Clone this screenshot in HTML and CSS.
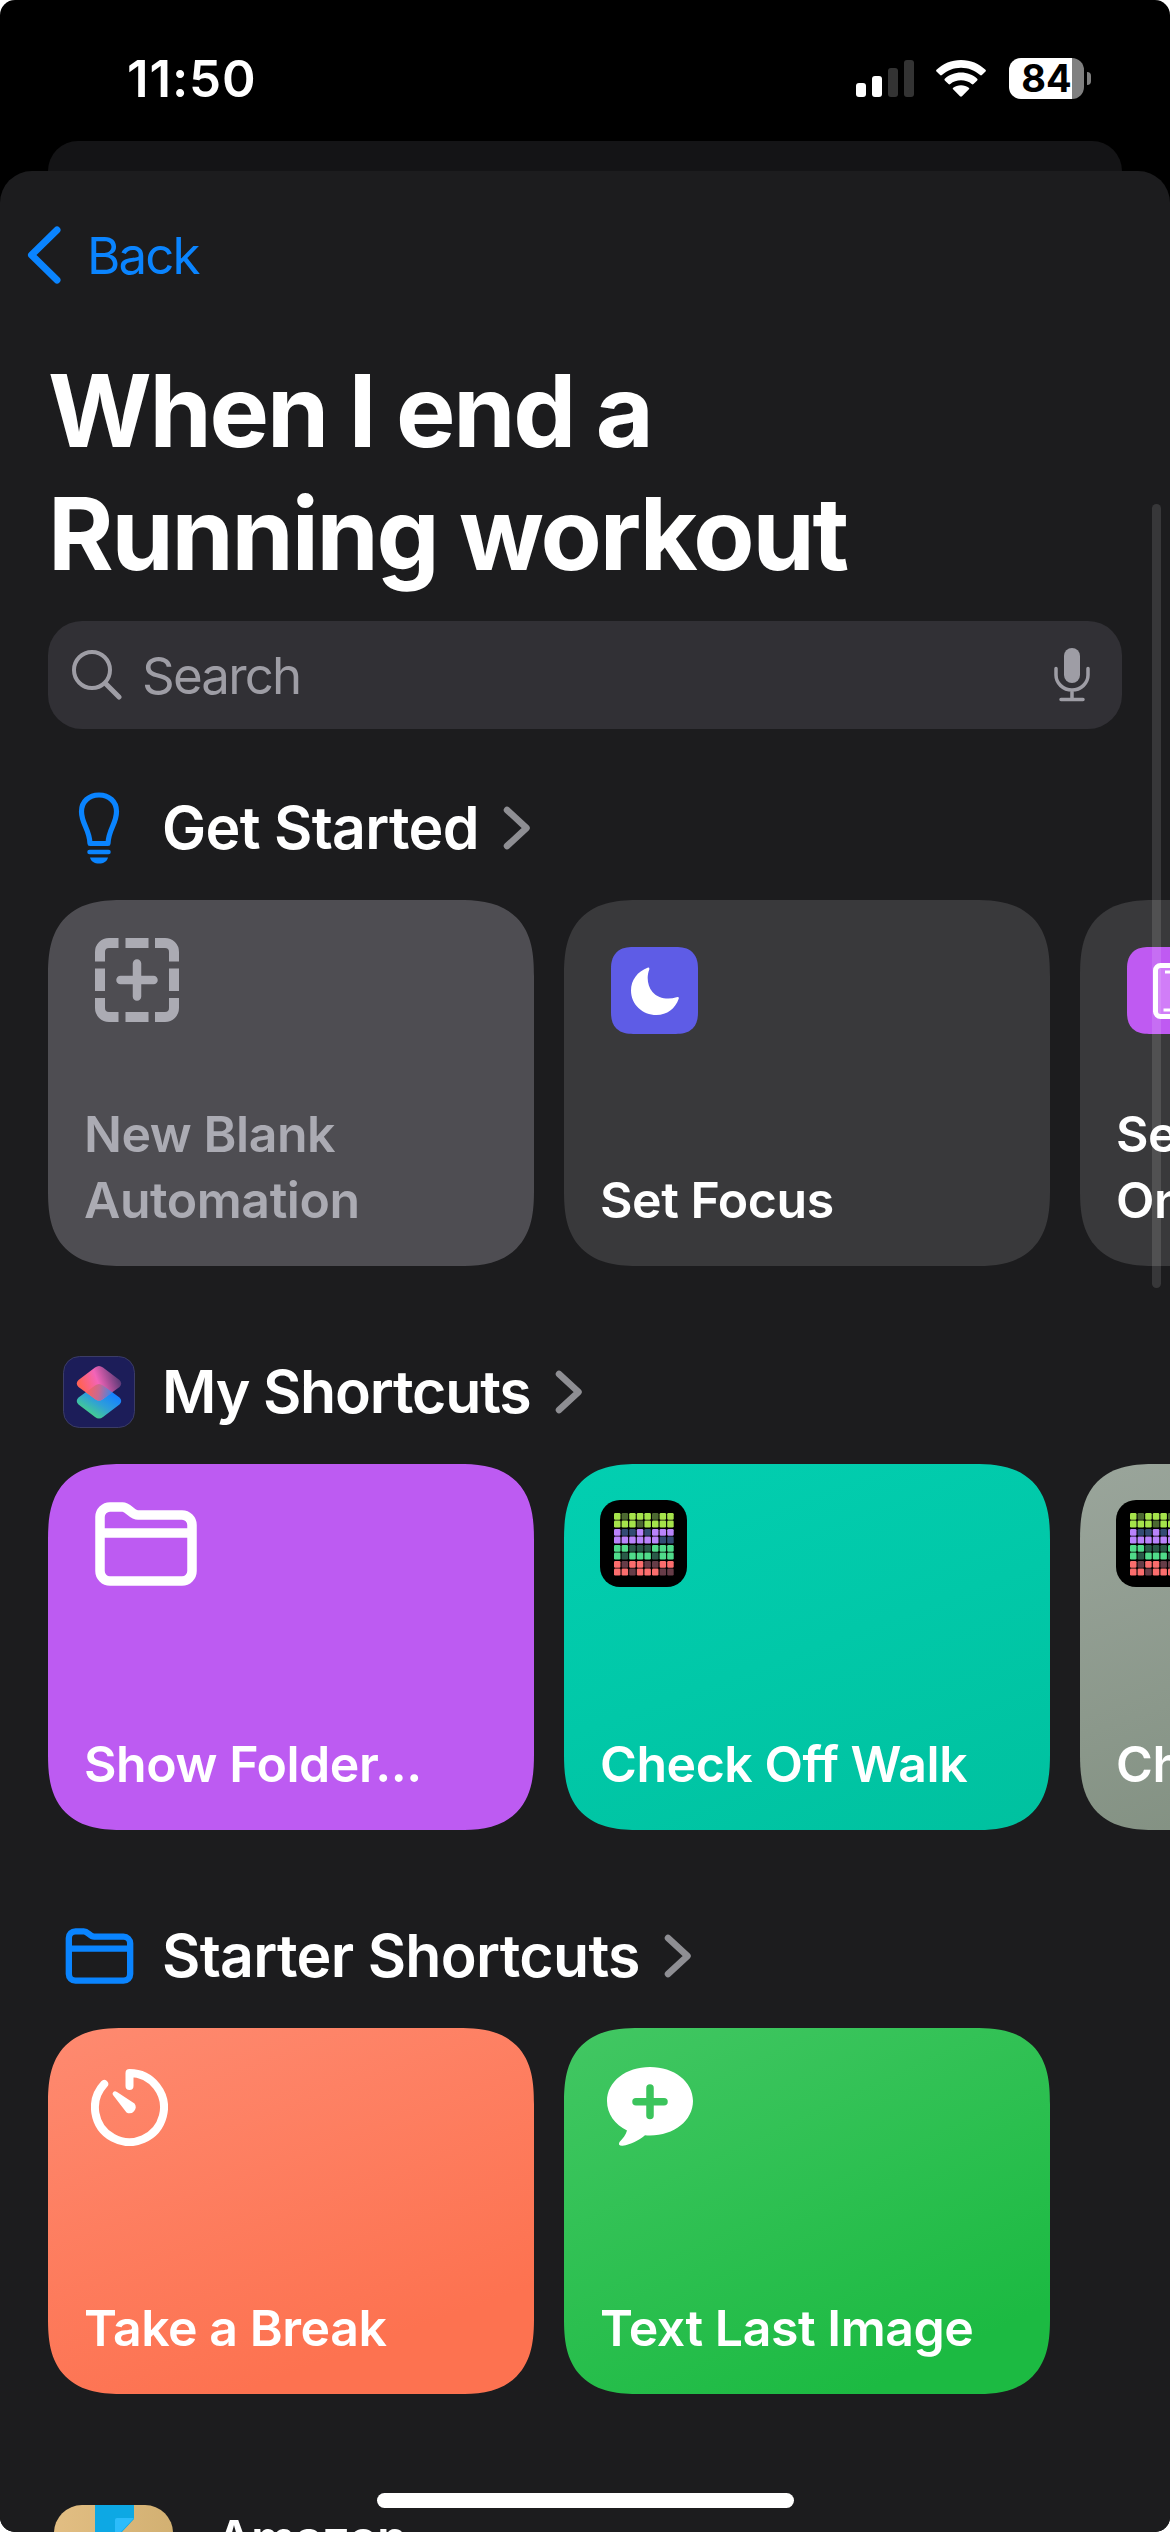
FILE: index.html
```html
<!DOCTYPE html>
<html lang="en">
<head>
    <meta charset="UTF-8">
    <meta name="viewport" content="width=device-width, initial-scale=1.0">
    <title>When I end a Running workout</title>
    <link rel="stylesheet" href="styles.css">
</head>
<body>
    <div class="phone">
        <header class="status-bar">
            <span class="time">11:50</span>
            <div class="status-icons">
                <svg class="signal" width="58" height="37" viewBox="0 0 58 37" fill="#fff">
                    <rect x="0" y="23" width="10" height="14" rx="3"/>
                    <rect x="16" y="16" width="10" height="21" rx="3"/>
                    <rect x="32" y="8" width="10" height="29" rx="3" fill="#333"/>
                    <rect x="48" y="0" width="10" height="37" rx="3" fill="#333"/>
                </svg>
                <svg class="wifi" width="50" height="37" viewBox="0 0 50 37" fill="#fff">
                    <path d="M25 0C34.500 0 43.200 3.700 49.500 9.800Q50.300 10.600 49.500 11.500L45.900 15.100Q45 15.900 44.100 15.100C39 10.500 32.300 7.800 25 7.800S11 10.500 5.900 15.100Q5 15.900 4.100 15.100L.5 11.500Q-.3 10.600 .5 9.800C6.800 3.700 15.500 0 25 0z"/>
                    <path d="M25 12.600C31.200 12.600 36.900 14.900 41.200 18.700Q42 19.500 41.200 20.400L37.500 24Q36.600 24.800 35.700 24C32.800 21.600 29.100 20.300 25 20.300S17.200 21.600 14.300 24Q13.400 24.800 12.500 24L8.800 20.400Q8 19.500 8.800 18.700C13.100 14.900 18.800 12.600 25 12.600z"/>
                    <path d="M25 25.200C28 25.200 30.700 26.200 32.800 27.700Q33.700 28.500 32.900 29.300L26 36.300Q25 37.200 24 36.300L17.100 29.300Q16.300 28.500 17.200 27.700C19.300 26.200 22 25.200 25 25.200z"/>
                </svg>
                <div class="battery">
                    <span class="battery-level">84</span>
                </div>
                <span class="battery-tip"></span>
            </div>
        </header>

        <div class="sheet-behind"></div>

        <main class="sheet">
            <nav class="nav">
                <svg width="34" height="58" viewBox="0 0 34 58" fill="none" stroke="#0a84ff" stroke-width="7" stroke-linecap="round" stroke-linejoin="round"><path d="M30 4L4.500 29l25.500 25"/></svg>
                <span class="back">Back</span>
            </nav>

            <h1>When I end a<br>Running workout</h1>

            <div class="search">
                <svg width="50" height="50" viewBox="0 0 50 50" fill="none" stroke="#9e9da5" stroke-linecap="round"><circle cx="20" cy="20" r="18" stroke-width="4"/><path d="M33.500 33.500l13.500 13.500" stroke-width="5"/></svg>
                <span class="placeholder">Search</span>
                <svg width="36" height="54" viewBox="0 0 36 54" fill="none" stroke="#9e9da5" stroke-width="3.500" stroke-linecap="round"><rect x="10" y="0" width="16" height="35" rx="8" fill="#9e9da5" stroke="none"/><path d="M2 20.500v6.500a16 15 0 0 0 32 0v-6.500M18 42v9M7 51.500h22"/></svg>
            </div>

            <section>
                <div class="section-header">
                    <span class="section-icon">
                        <svg width="42" height="72" viewBox="0 0 42 72" fill="none" stroke="#0a84ff"><path d="M12 51.500C11.500 37 3.500 32 3.500 19.500C3.500 9.500 11 3 21 3S38.500 9.500 38.500 19.500C38.500 32 30.500 37 30 51.500z" stroke-width="5.200" stroke-linejoin="round"/><path d="M11.500 60h19" stroke-width="4.500" stroke-linecap="round"/><path d="M12 65.500h18c-1 4-4.500 6-9 6s-8-2-9-6z" fill="#0a84ff" stroke="none"/></svg>
                    </span>
                    <h2>Get Started</h2>
                    <svg class="chevron" width="27" height="44" viewBox="0 0 27 44"><path d="M4 4l19.500 18L4 40"/></svg>
                </div>
                <div class="cards">
                    <div class="card blank">
                        <svg class="icon" width="84" height="84" viewBox="0 0 84 84" fill="none" stroke="#ababb3" stroke-width="10"><path d="M5 23.500V14a9 9 0 0 1 9-9h9.500M60 5h10a9 9 0 0 1 9 9v9.500M79 60v10a9 9 0 0 1-9 9H60M23.500 79H14a9 9 0 0 1-9-9V60M30.500 5h23M30.500 79h23M5 30.500v22.500M79 30.500v22.500"/><path d="M42 25.500v33M25.500 42h33" stroke-width="8.500" stroke-linecap="round"/></svg>
                        <p>New Blank<br>Automation</p>
                    </div>
                    <div class="card dark">
                        <div class="tile focus">
                            <svg width="48" height="48" viewBox="0 0 48 48" fill="#fff"><path d="M16.500 .7Q18.700 0 18.300 2.400C15.300 10 16.500 19 21.500 25C27 31.500 37 33 45.500 30.300Q48.400 29.500 47.700 31.800C44.500 41.500 36 48 25.500 48C11.500 48 0 37.500 0 23.500C0 13 6.500 4.500 16.500 .7z"/></svg>
                        </div>
                        <p>Set Focus</p>
                    </div>
                    <div class="card dark">
                        <div class="tile display">
                            <svg width="36" height="56" viewBox="0 0 36 56"><rect x="2.500" y="2.500" width="31" height="51" rx="5" fill="#d17df8" stroke="#fff" stroke-width="5"/><path d="M12 9h12M10.500 47h15" stroke="#fff" stroke-width="3"/></svg>
                        </div>
                        <p>Set Always<br>On Display</p>
                    </div>
                </div>
            </section>

            <section>
                <div class="section-header">
                    <span class="section-icon">
                        <svg width="72" height="72" viewBox="0 0 72 72">
                            <defs>
                                <linearGradient id="top" x1=".1" y1=".6" x2=".95" y2=".35"><stop offset="0" stop-color="#ff6259"/><stop offset=".45" stop-color="#f364b8"/><stop offset="1" stop-color="#5c3a77"/></linearGradient>
                                <linearGradient id="bottom" x1=".8" y1=".3" x2=".3" y2=".9"><stop offset="0" stop-color="#1583ff"/><stop offset=".5" stop-color="#2f9fd8"/><stop offset="1" stop-color="#45cf8e"/></linearGradient>
                                <linearGradient id="mid" x1="0" y1=".3" x2="1" y2=".4"><stop offset="0" stop-color="#ff6259"/><stop offset=".5" stop-color="#c76993"/><stop offset="1" stop-color="#3e86e6"/></linearGradient>
                            </defs>
                            <rect x=".5" y=".5" width="71" height="71" rx="16" fill="#1c1d59" stroke="#3b3c66"/>
                            <path d="M32 29.500q4-3 8 0l16.500 12q3.500 3.500 0 7L40 61q-4 3-8 0L15.500 48.500q-3.500-3.500 0-7z" fill="url(#bottom)"/>
                            <path d="M32 11.500q4-3 8 0l16.500 12.500q3.500 3.500 0 7L40 43q-4 3-8 0L15.500 31q-3.500-3.500 0-7z" fill="url(#top)"/>
                            <path d="M36 28q2 0 4 1.500l9.500 7L40 43q-4 3-8 0l-9-6.700L32 29.500q2-1.500 4-1.500z" fill="url(#mid)"/>
                        </svg>
                    </span>
                    <h2 class="tight">My Shortcuts</h2>
                    <svg class="chevron" width="27" height="44" viewBox="0 0 27 44"><path d="M4 4l19.500 18L4 40"/></svg>
                </div>
                <div class="cards">
                    <div class="card purple">
                        <svg class="icon" width="102" height="84" viewBox="0 0 102 84" fill="none" stroke="#fff" stroke-width="9.500"><path d="M5 15a10 10 0 0 1 10-10h12.500c6 0 9 8 15.500 8H87a10 10 0 0 1 10 10v46a10 10 0 0 1-10 10H15A10 10 0 0 1 5 69zM5 31h92"/></svg>
                        <p>Show Folder...</p>
                    </div>
                    <div class="card teal">
                        <svg class="grid-icon" width="87" height="87" viewBox="0 0 87 87"></svg>
                        <p>Check Off Walk</p>
                    </div>
                    <div class="card sage">
                        <svg class="grid-icon" width="87" height="87" viewBox="0 0 87 87"></svg>
                        <p>Check Off Run</p>
                    </div>
                </div>
            </section>

            <section>
                <div class="section-header">
                    <span class="section-icon">
                        <svg width="69" height="56" viewBox="0 0 102 84" fill="none" stroke="#0a84ff" stroke-width="9.500"><path d="M5 15a10 10 0 0 1 10-10h12.500c6 0 9 8 15.500 8H87a10 10 0 0 1 10 10v46a10 10 0 0 1-10 10H15A10 10 0 0 1 5 69zM5 31h92"/></svg>
                    </span>
                    <h2>Starter Shortcuts</h2>
                    <svg class="chevron" width="27" height="44" viewBox="0 0 27 44"><path d="M4 4l19.500 18L4 40"/></svg>
                </div>
                <div class="cards">
                    <div class="card orange">
                        <svg class="icon timer" width="77" height="77" viewBox="0 0 77 77" fill="none" stroke="#fff" stroke-width="8" stroke-linecap="round" stroke-linejoin="round"><path d="M38.500 17V4A34.500 34.500 0 1 1 13.200 15"/><path d="M22 23.500Q23.500 21.500 26 23L43.500 34.500A6.200 6.200 0 0 1 35.500 43.500L22 26Q21 24.500 22 23.500z" fill="#fff" stroke="none"/></svg>
                        <p>Take a Break</p>
                    </div>
                    <div class="card green">
                        <svg class="icon bubble" width="86" height="80" viewBox="0 0 86 80"><path d="M43 0C67 0 86 14.500 86 34S67 68.500 43 68.500Q40 68.500 38 68.300C31.500 73.500 24 77.500 15.500 78.800Q10.500 79 12.500 75C16 71.500 19 67.500 20 63.500C8 57.500 0 47 0 34C0 14.500 19 0 43 0z" fill="#fff"/><path d="M43 21v27.500M29 34.700h28" stroke="#3bc45c" stroke-width="7.500" stroke-linecap="round"/></svg>
                        <p>Text Last Image</p>
                    </div>
                </div>
            </section>

            <div class="app-row">
                <svg width="119" height="119" viewBox="0 0 119 119">
                    <defs>
                        <linearGradient id="box" x1="0" y1="0" x2="1" y2="0"><stop offset="0" stop-color="#e2be83"/><stop offset="1" stop-color="#d2b072"/></linearGradient>
                    </defs>
                    <rect width="119" height="119" rx="28" fill="url(#box)"/>
                    <path d="M41 0h39v14L67 28H41z" fill="#0da8e4"/>
                    <path d="M61 15q0-2 2-2h17L66 28h-5z" fill="#2cbcfb"/>
                </svg>
                <span class="app-name">Amazon</span>
            </div>
        </main>

        <div class="scrollbar"></div>
        <div class="home-indicator"></div>
    </div>

    <script>
        // 1 = checked, 0 = missed, two rows per habit
        const habitRows = [
            '10111011', '11101111',
            '10010111', '11111100',
            '11000111', '10111011',
            '10110011', '11011100'
        ];
        const colors = [['#a5e34b', '#4c6931'], ['#b983fb', '#334b74'], ['#50db8a', '#2a5a48'], ['#fb6d6d', '#663c47']];

        let cells = '<rect width="87" height="87" rx="20" fill="#000"/>';
        habitRows.forEach((row, r) => {
            const habit = Math.floor(r / 2);
            const y = 13 + habit * 16 + (r % 2) * 7.6;
            row.split('').forEach((on, c) => {
                cells += `<rect x="${14 + c * 7.6}" y="${y}" width="6.500" height="6.800" rx="1.200" fill="${colors[habit][on === '1' ? 0 : 1]}"/>`;
            });
        });
        document.querySelectorAll('.grid-icon').forEach(svg => svg.innerHTML = cells);
    </script>
</body>
</html>
```
FILE: styles.css
```css
* {
    box-sizing: border-box;
}
body {
    margin: 0;
    background: #fff;
    font-family: Inter, "Liberation Sans", sans-serif;
    color: #fff;
}
svg {
    display: block;
    flex-shrink: 0;
}
.phone {
    position: relative;
    width: 1170px;
    height: 2532px;
    overflow: hidden;
    background: #000;
    border-radius: 15px;
}

/* status bar */
.status-bar {
    display: flex;
    align-items: center;
    justify-content: space-between;
    height: 141px;
    padding: 15px 79px 0 127px;
}
.time {
    font-size: 51px;
    font-weight: 600;
    letter-spacing: 0.9px;
}
.status-icons {
    display: flex;
    align-items: center;
}
.wifi {
    margin: 0 23px 0 22px;
}
.battery {
    width: 75px;
    height: 41px;
    border-radius: 12px;
    background: linear-gradient(to right, #fff 63px, #808080 63px);
}
.battery-level {
    display: block;
    width: 75px;
    font-size: 38px;
    font-weight: 700;
    line-height: 41px;
    text-align: center;
    color: #000;
}
.battery-tip {
    width: 4px;
    height: 13px;
    margin-left: 3px;
    border-radius: 0 4px 4px 0;
    background: #808080;
}

/* sheets */
.sheet-behind {
    height: 30px;
    margin: 0 48px;
    border-radius: 30px 30px 0 0;
    background: #141416;
}
.sheet {
    height: 2361px;
    border-radius: 32px 32px 0 0;
    background: #1c1c1e;
    overflow: hidden;
}
.nav {
    display: flex;
    align-items: center;
    gap: 26px;
    height: 168px;
    padding-left: 27px;
    color: #0a84ff;
}
.back {
    font-size: 51px;
    letter-spacing: -1.9px;
}
h1 {
    margin: 10px 0 26px 48px;
    font-size: 100px;
    font-weight: 700;
    line-height: 123px;
    letter-spacing: -2.2px;
}
.search {
    display: flex;
    align-items: center;
    height: 108px;
    margin: 0 48px 63px;
    padding: 0 32px 0 24px;
    border-radius: 34px;
    background: #313035;
}
.placeholder {
    flex: 1;
    margin-left: 20px;
    font-size: 51px;
    letter-spacing: -1.8px;
    color: #9e9da5;
}

/* sections */
section {
    margin-bottom: 90px;
}
.section-header {
    display: flex;
    align-items: center;
    height: 72px;
    margin-bottom: 36px;
    padding-left: 63px;
}
.section-icon {
    display: flex;
    justify-content: center;
    width: 72px;
}
h2 {
    margin: 0 24px 0 27px;
    font-size: 59px;
    font-weight: 600;
    line-height: 72px;
    letter-spacing: -0.7px;
}
.tight {
    letter-spacing: -1.2px;
}
.chevron path {
    fill: none;
    stroke: #8e8e93;
    stroke-width: 6.5;
    stroke-linecap: round;
    stroke-linejoin: round;
}
.cards {
    display: flex;
    gap: 30px;
    padding-left: 48px;
}
.card {
    display: flex;
    flex-direction: column;
    flex-shrink: 0;
    justify-content: space-between;
    width: 486px;
    height: 366px;
    padding: 36px 36px 33px;
    border-radius: 76px;
    corner-shape: superellipse(1.4);
}
.card p {
    margin: 0;
    font-size: 50px;
    font-weight: 600;
    line-height: 66px;
    letter-spacing: -0.45px;
    white-space: nowrap;
}
.icon {
    margin: 2px 0 0 11px;
}
.timer {
    margin: 5px 0 0 7px;
}
.bubble {
    margin: 3px 0 0 7px;
}
.tile {
    display: flex;
    align-items: center;
    justify-content: center;
    width: 87px;
    height: 87px;
    margin: 11px 0 0 11px;
    border-radius: 22px;
    corner-shape: superellipse(1.3);
}
.focus {
    background: #5e5ce6;
}
.display {
    background: #bf5af2;
}
.blank {
    background: #4e4d52;
    color: #ababb3;
}
.dark {
    background: #39393b;
}
.purple {
    background: #bd5bf2;
}
.teal {
    background: linear-gradient(160deg, #02cfb1, #00c19f);
}
.sage {
    background: linear-gradient(160deg, #9aa59b, #7c8b7b);
}
.orange {
    background: linear-gradient(160deg, #fe8a70, #fd7250 80%);
}
.green {
    background: linear-gradient(155deg, #42c763, #1cba42 85%);
}

.app-row {
    display: flex;
    align-items: flex-start;
    gap: 43px;
    margin-top: 111px;
    padding-left: 54px;
}
.app-name {
    font-size: 50px;
    font-weight: 600;
    line-height: 66px;
    letter-spacing: -1.4px;
}

/* overlays */
.scrollbar {
    position: absolute;
    top: 504px;
    right: 9px;
    width: 9px;
    height: 784px;
    border-radius: 5px;
    background: rgba(255, 255, 255, 0.12);
}
.home-indicator {
    position: absolute;
    bottom: 24px;
    left: 377px;
    width: 417px;
    height: 15px;
    border-radius: 8px;
    background: #fff;
}
```
